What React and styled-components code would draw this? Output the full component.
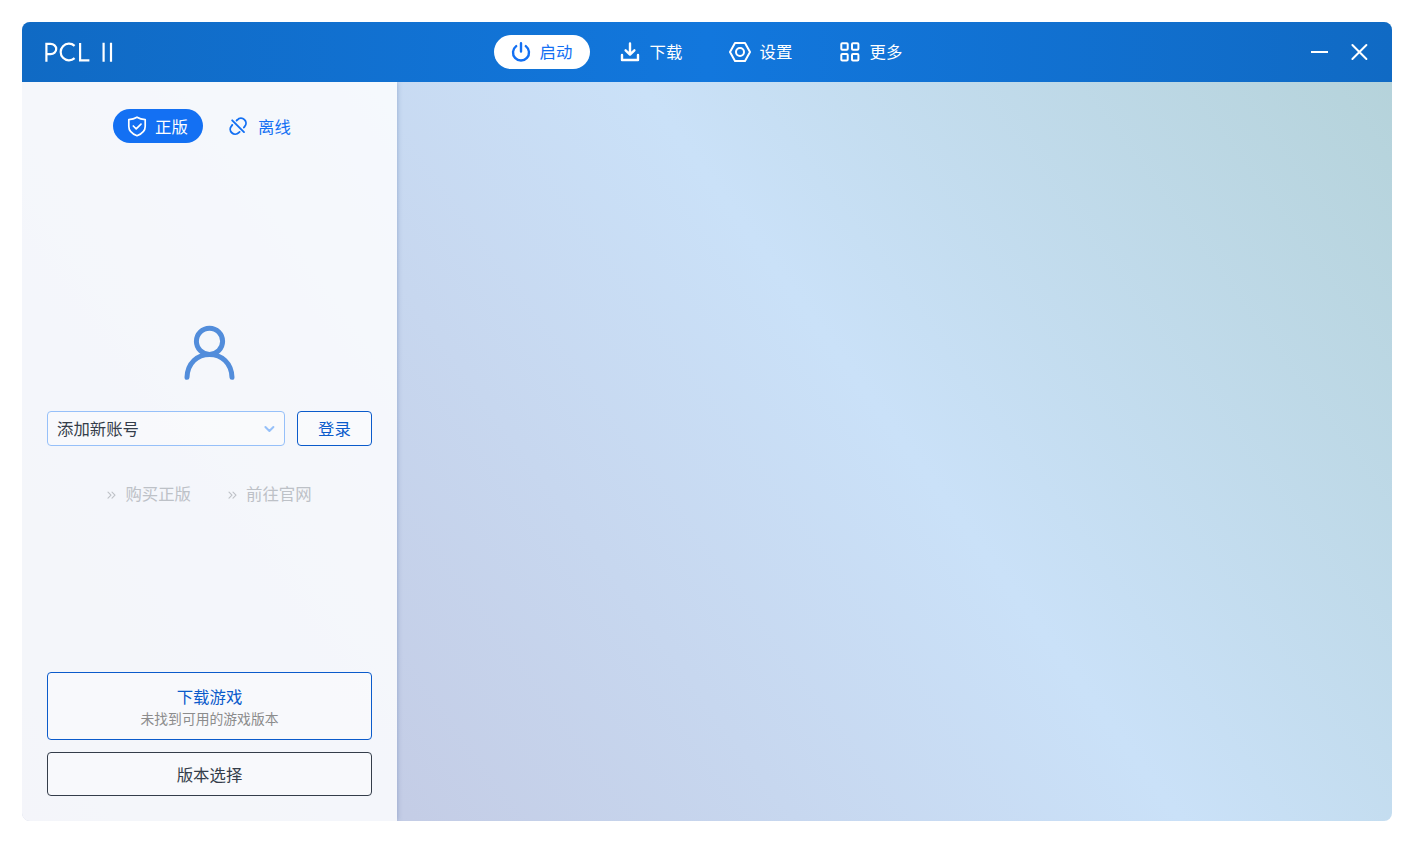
import React from "react";
import styled, { createGlobalStyle } from "styled-components";

const Global = createGlobalStyle`
  * { box-sizing: border-box; }
  body { margin: 0; background: #fff; }
  button { font: inherit; margin: 0; padding: 0; border: 0; background: none; color: inherit; }
`;

const Page = styled.div`
  width: 1415px;
  height: 844px;
  padding: 22px 23px 23px 22px;
  font-family: "Noto Sans CJK SC", sans-serif;
  font-weight: 400;
  font-size: 16.4px;
  line-height: 24px;
`;

const Window = styled.main`
  display: flex;
  flex-direction: column;
  height: 799px;
  border-radius: 8px;
  overflow: hidden;
  background: linear-gradient(233.7deg, #b4d2d9 0%, #cae1f8 40.7%, #c4cde6 80%, #c3c9e1 100%);
`;

const Header = styled.header`
  position: relative;
  z-index: 1;
  display: grid;
  grid-template-columns: 1fr auto 1fr;
  align-items: center;
  height: 60px;
  flex: none;
  padding: 0 22px;
  color: #fff;
  background: linear-gradient(90deg, #106ac4, #1277dd 50%, #106ac4);
`;

const Logo = styled.svg`
  width: 72px;
  height: 22px;
  display: block;
`;

const Tabs = styled.nav`
  display: flex;
  gap: 14px;
`;

const Pill = styled.button`
  display: flex;
  align-items: center;
  gap: ${(p) => p.$gap ?? 8}px;
  width: ${(p) => p.$width}px;
  height: 34px;
  padding-left: ${(p) => p.$pad ?? 16}px;
  border-radius: 17px;
  color: ${(p) => p.$color};
  background: ${(p) => p.$fill ?? "transparent"};
  white-space: nowrap;
`;

const Label = styled.span`
  padding-bottom: ${(p) => p.$lift ?? 1}px;
`;

const Icon = styled.svg`
  display: block;
  flex: none;
  width: ${(p) => p.$size ?? 22}px;
  height: ${(p) => p.$size ?? 22}px;
  fill: none;
  stroke: currentColor;
  stroke-width: ${(p) => p.$stroke ?? 2};
  stroke-linecap: ${(p) => p.$cap ?? "round"};
  stroke-linejoin: round;
`;

const Controls = styled.div`
  display: flex;
  justify-content: flex-end;
  gap: 18px;
`;

const Body = styled.div`
  display: flex;
  flex: 1;
`;

const Side = styled.aside`
  display: flex;
  flex-direction: column;
  width: 375px;
  padding: 27px 25px 25px;
  background: rgba(255, 255, 255, 0.82);
  box-shadow: 0 0 5px rgba(60, 90, 150, 0.4);
`;

const Modes = styled.div`
  display: flex;
  gap: 12px;
  padding-left: 66px;
`;

const Account = styled.section`
  display: flex;
  flex-direction: column;
  align-items: center;
  padding-top: 180px;
`;

const Avatar = styled.svg`
  display: block;
  width: 54px;
  height: 58px;
  fill: none;
  stroke: #528ddb;
  stroke-width: 5;
  stroke-linecap: round;
`;

const LoginRow = styled.div`
  display: flex;
  gap: 12px;
  width: 325px;
  margin-top: 30px;
`;

const Outlined = styled.button`
  display: flex;
  flex-direction: column;
  align-items: center;
  justify-content: center;
  width: ${(p) => p.$width}px;
  height: ${(p) => p.$height}px;
  border: 1px solid ${(p) => p.$color};
  border-radius: 4px;
  color: ${(p) => p.$color};
  background: rgba(255, 255, 255, 0.4);
`;

const Select = styled(Outlined)`
  flex-direction: row;
  justify-content: space-between;
  padding: 0 9px;
  border-color: #96c0f9;
`;

const Chevron = styled(Icon)`
  color: #96c0f9;
`;

const Links = styled.div`
  display: flex;
  gap: 37px;
  margin-top: 35px;
  color: #bdc1c7;
`;

const Link = styled.a`
  display: flex;
  align-items: center;
  gap: 9px;
`;

const Actions = styled.footer`
  display: flex;
  flex-direction: column;
  gap: 12px;
  margin-top: auto;
`;

const Note = styled.span`
  font-size: 13.8px;
  line-height: 20px;
  color: #8c8c8c;
`;

const Power = () => (
  <Icon viewBox="0 0 22 22" $stroke="2.4">
    <path d="M6.2 5.1A8 8 0 1 0 15.8 5.1M11 2.2V10.5" />
  </Icon>
);

const Download = () => (
  <Icon viewBox="0 0 22 22" $stroke="2.4">
    <path d="M11 2.5V13M6.6 9.3L11 13.6L15.4 9.3M3 14V19H19V14" />
  </Icon>
);

const Settings = () => (
  <Icon viewBox="0 0 22 22">
    <path d="M6 2H16L21 11L16 20H6L1 11Z" />
    <circle cx="11" cy="11" r="4" />
  </Icon>
);

const Grid = () => (
  <Icon viewBox="0 0 22 22">
    <rect x="2.3" y="2.3" width="6.4" height="6.4" rx="1" />
    <rect x="13" y="2.3" width="6.4" height="6.4" rx="1" />
    <rect x="2.3" y="13" width="6.4" height="6.4" rx="1" />
    <rect x="13" y="13" width="6.4" height="6.4" rx="1" />
  </Icon>
);

const Shield = () => (
  <Icon viewBox="0 0 22 22" $stroke="1.7">
    <path d="M11 2.2C13.8 4 16.5 4.5 19.2 4.6V11.4C19.2 15.9 15.5 18.9 11 20.7C6.5 18.9 2.8 15.9 2.8 11.4V4.6C5.5 4.5 8.2 4 11 2.2Z" />
    <path d="M7.3 11L10.2 13.8L15 9.1" />
  </Icon>
);

const Unlink = () => (
  <Icon viewBox="0 0 22 22" $stroke="1.9">
    <path d="M9.6 5.5L10.4 4.8A4.8 4.8 0 0 1 17.6 11.6L16.9 12.5M12.6 16.9L11.8 17.6A4.8 4.8 0 0 1 4.6 10.8L5.3 9.9M5.2 5.3L17 17.1" />
  </Icon>
);

const More = () => (
  <Icon viewBox="0 0 9 8" $size={9} $stroke="1.1">
    <path d="M1 1.6L4 4.6L1 7.6M5 1.6L8 4.6L5 7.6" />
  </Icon>
);

export default function App() {
  return (
    <Page>
      <Global />
      <Window>
        <Header>
          <Logo viewBox="0 0 72 22" fill="none" stroke="#fff" strokeWidth="2.2" aria-label="PCL II">
            <path d="M2.4 20.8V2.8H6.6A5.4 5 0 0 1 6.6 13.2H2.4M30.6 4.9A8.3 8.3 0 1 0 30.6 17.1M36.1 2V19.4H45.4M59.6 1.8V20.8M67 1.8V20.8" />
          </Logo>
          <Tabs>
            <Pill $width={96} $color="#1370f3" $fill="#fff" $gap={7.5}><Power /><Label $lift={2}>启动</Label></Pill>
            <Pill $width={96} $color="#fff" $pad={15} $gap={8.5}><Download /><Label $lift={2}>下载</Label></Pill>
            <Pill $width={96} $color="#fff" $pad={15} $gap={8.5}><Settings /><Label $lift={2}>设置</Label></Pill>
            <Pill $width={96} $color="#fff" $pad={15} $gap={8.5}><Grid /><Label $lift={2}>更多</Label></Pill>
          </Tabs>
          <Controls>
            <Icon viewBox="0 0 22 22" $cap="butt"><path d="M3 11H20" /></Icon>
            <Icon viewBox="0 0 22 22"><path d="M4.4 4L18.4 18M18.4 4L4.4 18" /></Icon>
          </Controls>
        </Header>
        <Body>
          <Side>
            <Modes>
              <Pill $width={90} $color="#fff" $fill="#1370f3" $pad={13} $gap={7}><Shield /><Label $lift={0}>正版</Label></Pill>
              <Pill $width={90} $color="#1370f3" $pad={12} $gap={9}><Unlink /><Label $lift={0}>离线</Label></Pill>
            </Modes>
            <Account>
              <Avatar viewBox="0 0 54 58">
                <circle cx="26.5" cy="18.3" r="13.1" />
                <path d="M4 54.3C4.5 40 14.5 31.4 26.5 31.4S48.5 40 49 54.3" />
              </Avatar>
              <LoginRow>
                <Select $width={238} $height={35} $color="#343d4a">
                  <Label>添加新账号</Label>
                  <Chevron viewBox="0 0 12 12" $size={12}><path d="M2.4 4L6.4 8L10.4 4" /></Chevron>
                </Select>
                <Outlined $width={75} $height={35} $color="#0b5bcb"><Label>登录</Label></Outlined>
              </LoginRow>
              <Links>
                <Link><More /><Label $lift={2}>购买正版</Label></Link>
                <Link><More /><Label $lift={2}>前往官网</Label></Link>
              </Links>
            </Account>
            <Actions>
              <Outlined $width={325} $height={68} $color="#0b5bcb">
                下载游戏
                <Note>未找到可用的游戏版本</Note>
              </Outlined>
              <Outlined $width={325} $height={44} $color="#343d4a">版本选择</Outlined>
            </Actions>
          </Side>
        </Body>
      </Window>
    </Page>
  );
}
